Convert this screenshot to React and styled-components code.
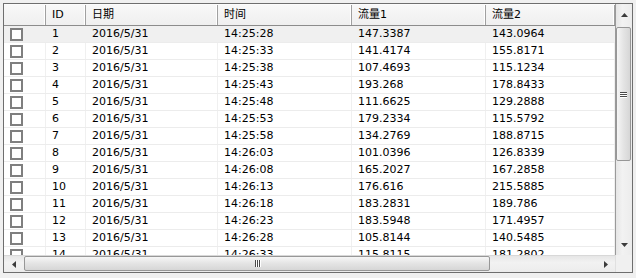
import React from 'react';
import styled, { createGlobalStyle } from 'styled-components';

const GlobalStyle = createGlobalStyle`
  html, body { margin: 0; padding: 0; background: #f0f0f0; }
  body { font-family: "DejaVu Sans", "Noto Sans CJK SC", sans-serif; font-size: 11px; }
`;

const COLS = '42px 40px 132px 134px 134px 1fr';

const rows = [
  ['1', '2016/5/31', '14:25:28', '147.3387', '143.0964'],
  ['2', '2016/5/31', '14:25:33', '141.4174', '155.8171'],
  ['3', '2016/5/31', '14:25:38', '107.4693', '115.1234'],
  ['4', '2016/5/31', '14:25:43', '193.268', '178.8433'],
  ['5', '2016/5/31', '14:25:48', '111.6625', '129.2888'],
  ['6', '2016/5/31', '14:25:53', '179.2334', '115.5792'],
  ['7', '2016/5/31', '14:25:58', '134.2769', '188.8715'],
  ['8', '2016/5/31', '14:26:03', '101.0396', '126.8339'],
  ['9', '2016/5/31', '14:26:08', '165.2027', '167.2858'],
  ['10', '2016/5/31', '14:26:13', '176.616', '215.5885'],
  ['11', '2016/5/31', '14:26:18', '183.2831', '189.786'],
  ['12', '2016/5/31', '14:26:23', '183.5948', '171.4957'],
  ['13', '2016/5/31', '14:26:28', '105.8144', '140.5485'],
  ['14', '2016/5/31', '14:26:33', '115.8115', '181.2802'],
];

const Frame = styled.div`
  margin: 3px 0 0 3px;
  width: 628px;
  height: 268px;
  border: 1px solid #6e6e6e;
  background: #fff;
  display: flex;
  flex-direction: column;
`;

const Body = styled.div`
  display: flex;
  height: 251px;
`;

const GridArea = styled.div`
  width: 611px;
  overflow: hidden;
  display: flex;
  flex-direction: column;
`;

const HeaderRow = styled.div`
  display: grid;
  grid-template-columns: ${COLS};
  height: 20px;
  flex: none;
  background: linear-gradient(#f8f8f8, #efefef);
  border-top: 1px solid #fcfcfc;
  border-bottom: 1px solid #8c8c8c;
`;

const HeaderCell = styled.div`
  padding-left: 6px;
  line-height: 20px;
  color: #000;
  border-right: 1px solid #a0a0a0;
  box-shadow: inset -1px 0 0 #fff;
  white-space: nowrap;
`;

const Row = styled.div`
  display: grid;
  grid-template-columns: ${COLS};
  height: 16px;
  flex: none;
  background: ${p => (p.$current ? '#f0f0f0' : '#fff')};
  border-bottom: 1px solid #ececec;
`;

const Cell = styled.div`
  padding-left: 6px;
  line-height: 16px;
  color: #000;
  border-right: 1px solid #f0f0f0;
  white-space: nowrap;
`;

const BoxCell = styled.div`
  padding-left: 6px;
  display: flex;
  align-items: center;
  border-right: 1px solid #f0f0f0;
`;

const CheckBox = styled.span`
  width: 9px;
  height: 9px;
  border: 2px solid #7f7f7f;
  background: #fff;
`;

const VScroll = styled.div`
  width: 16px;
  border-left: 1px solid #9a9a9a;
  background: linear-gradient(90deg, #e6e6e6, #f2f2f2 40%, #ececec);
  display: flex;
  flex-direction: column;
`;

const HScroll = styled.div`
  width: 611px;
  display: flex;
  align-items: stretch;
  border-top: 1px solid #d8d8d8;
  background: linear-gradient(#e6e6e6, #f2f2f2 40%, #ececec);
`;

const Arrow = styled.div`
  flex: none;
  width: ${p => (p.$horiz ? '19px' : '16px')};
  height: ${p => (p.$horiz ? '16px' : '21px')};
  display: flex;
  align-items: center;
  justify-content: center;
`;

const Track = styled.div`
  flex: 1;
  display: flex;
  flex-direction: ${p => (p.$horiz ? 'row' : 'column')};
  padding: ${p => (p.$horiz ? '0 1px 0 1px' : '2px 0 0 0')};
`;

const Thumb = styled.div`
  box-sizing: border-box;
  width: ${p => (p.$horiz ? '466px' : '15px')};
  height: ${p => (p.$horiz ? '15px' : '134px')};
  border: 1px solid #979797;
  border-radius: 2px;
  background: ${p =>
    p.$horiz
      ? 'linear-gradient(#f6f6f6, #e4e4e4 50%, #d6d6d6)'
      : 'linear-gradient(90deg, #f6f6f6, #e4e4e4 50%, #d6d6d6)'};
  display: flex;
  align-items: center;
  justify-content: center;
`;

const Grip = styled.div`
  display: flex;
  flex-direction: ${p => (p.$horiz ? 'row' : 'column')};
  gap: 1px;
  & > span {
    display: block;
    background: #4a4a4a;
    width: ${p => (p.$horiz ? '1px' : '7px')};
    height: ${p => (p.$horiz ? '7px' : '1px')};
    box-shadow: ${p => (p.$horiz ? '1px 0 0 #fff' : '0 1px 0 #fff')};
  }
`;

const BottomBar = styled.div`
  display: flex;
  height: 17px;
`;

const Corner = styled.div`
  width: 16px;
  border-left: 1px solid #e0e0e0;
  background: #f0f0f0;
`;

const Tri = ({ dir }) => {
  const pts = {
    up: '0,4 7,4 3.5,0',
    down: '0,0 7,0 3.5,4',
    left: '4,0 4,7 0,3.5',
    right: '0,0 0,7 4,3.5',
  }[dir];
  const vert = dir === 'up' || dir === 'down';
  return (
    <svg width={vert ? 7 : 4} height={vert ? 4 : 7}>
      <polygon points={pts} fill="#3c3c3c" />
    </svg>
  );
};

const Grips = ({ horiz }) => (
  <Grip $horiz={horiz}>
    <span />
    <span />
    <span />
  </Grip>
);

export default function App() {
  return (
    <>
      <GlobalStyle />
      <Frame>
        <Body>
          <GridArea>
            <HeaderRow>
              <HeaderCell />
              <HeaderCell>ID</HeaderCell>
              <HeaderCell>日期</HeaderCell>
              <HeaderCell>时间</HeaderCell>
              <HeaderCell>流量1</HeaderCell>
              <HeaderCell>流量2</HeaderCell>
            </HeaderRow>
            {rows.map((r, i) => (
              <Row key={r[0]} $current={i === 0}>
                <BoxCell>
                  <CheckBox />
                </BoxCell>
                {r.map((v, j) => (
                  <Cell key={j}>{v}</Cell>
                ))}
              </Row>
            ))}
          </GridArea>
          <VScroll>
            <Arrow>
              <Tri dir="up" />
            </Arrow>
            <Track>
              <Thumb>
                <Grips />
              </Thumb>
            </Track>
            <Arrow>
              <Tri dir="down" />
            </Arrow>
          </VScroll>
        </Body>
        <BottomBar>
          <HScroll>
            <Arrow $horiz>
              <Tri dir="left" />
            </Arrow>
            <Track $horiz>
              <Thumb $horiz>
                <Grips horiz />
              </Thumb>
            </Track>
            <Arrow $horiz>
              <Tri dir="right" />
            </Arrow>
          </HScroll>
          <Corner />
        </BottomBar>
      </Frame>
    </>
  );
}
